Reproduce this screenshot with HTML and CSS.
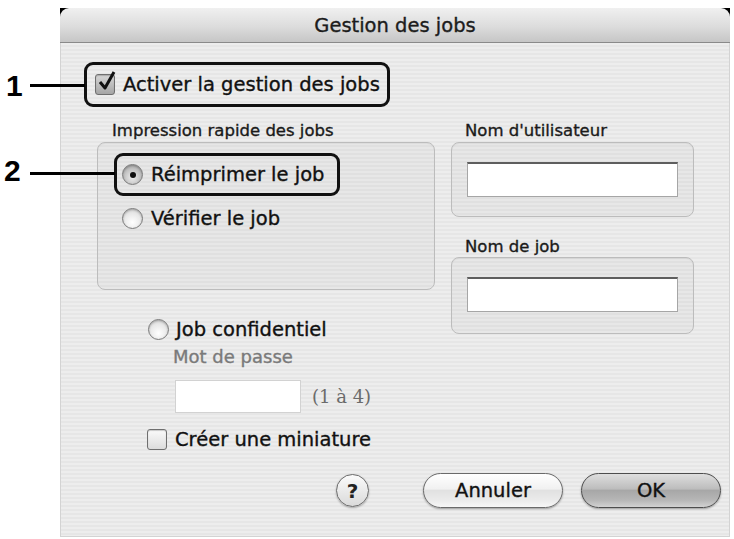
FILE: index.html
```html
<!DOCTYPE html>
<html lang="fr">
<head>
    <meta charset="UTF-8">
    <title>Gestion des jobs</title>
    <link rel="stylesheet" href="styles.css">
</head>
<body>
<div class="page">
    <!-- numbered callouts -->
    <div class="callout callout-1">1</div>
    <div class="leader leader-1"></div>
    <div class="callout callout-2">2</div>
    <div class="leader leader-2"></div>

    <div class="window">
        <div class="titlebar">Gestion des jobs</div>
        <div class="content">
            <div class="mark mark-main">
                <span class="checkbox checked">
                    <svg viewBox="0 0 20 22" width="20" height="22"><path d="M3 12 L8 18 L17 2" fill="none" stroke="#111" stroke-width="3" stroke-linejoin="round"/></svg>
                </span>
                <span class="text">Activer la gestion des jobs</span>
            </div>

            <div class="columns">
                <div class="col-left">
                    <div class="group-title">Impression rapide des jobs</div>
                    <div class="group group-quick">
                        <div class="mark mark-radio">
                            <span class="radio selected"></span>
                            <span class="text">Réimprimer le job</span>
                        </div>
                        <div class="option option-verify">
                            <span class="radio"></span>
                            <span>Vérifier le job</span>
                        </div>
                    </div>

                    <div class="option option-conf">
                        <span class="radio"></span>
                        <span>Job confidentiel</span>
                    </div>
                    <div class="hint">Mot de passe</div>
                    <div class="pass-row">
                        <span class="field-pass"></span>
                        <span class="range">(1 à 4)</span>
                    </div>
                    <div class="option option-thumb">
                        <span class="checkbox"></span>
                        <span>Créer une miniature</span>
                    </div>
                </div>

                <div class="col-right">
                    <div class="group-title">Nom d'utilisateur</div>
                    <div class="group group-field">
                        <div class="field"></div>
                    </div>
                    <div class="group-title title-job">Nom de job</div>
                    <div class="group group-field group-job">
                        <div class="field"></div>
                    </div>
                </div>
            </div>

            <div class="footer">
                <span class="help">?</span>
                <span class="button cancel">Annuler</span>
                <span class="button default">OK</span>
            </div>
        </div>
    </div>
</div>
</body>
</html>
```

FILE: styles.css
```css
* {
    box-sizing: border-box;
}

body {
    margin: 0;
    background-color: #fff;
    font-family: "DejaVu Sans", "Noto Sans", sans-serif;
    color: #111;
}

.page {
    position: relative;
    width: 734px;
    height: 539px;
    padding: 8px 0 0 60px;
    overflow: hidden;
}

/* callouts drawn over the dialog */
.callout {
    position: absolute;
    font-family: "Liberation Sans", Arial, sans-serif;
    font-weight: bold;
    font-size: 30px;
    line-height: 30px;
    color: #000;
}

.callout-1 {
    left: 6px;
    top: 71px;
}

.callout-2 {
    left: 4px;
    top: 156px;
}

.leader {
    position: absolute;
    left: 30px;
    height: 3px;
    background-color: #000;
}

.leader-1 {
    top: 84px;
    width: 55px;
}

.leader-2 {
    top: 172px;
    width: 85px;
}

/* window */
.window {
    width: 670px;
    height: 529px;
    display: flex;
    flex-direction: column;
    background-color: #000; /* shows only behind the rounded corners */
    -webkit-text-stroke: 0.35px currentColor; /* Lucida-like heavier strokes */
}

.titlebar {
    height: 35px;
    border-bottom: 1px solid #8a8a8a;
    border-radius: 9px 9px 0 0;
    background: linear-gradient(#f0f0f0, #dcdcdc 55%, #c6c6c6);
    display: flex;
    align-items: center;
    justify-content: center;
    font-size: 19.5px;
    color: #1c1c1c;
}

.content {
    flex: 1;
    border: 1px solid #d3d3d3;
    border-top: 0;
    background: repeating-linear-gradient(#ededed 0 2px, #e6e6e6 2px 4px);
    padding: 19px 0 0 23px;
}

/* black highlight frames */
.mark {
    display: flex;
    align-items: center;
    border: 3px solid #111;
    border-radius: 9px;
    font-size: 19.5px;
}

.mark-main {
    width: 306px;
    height: 45px;
    padding-left: 8px;
    gap: 8px;
}

.mark-radio {
    width: 226px;
    height: 43px;
    padding-left: 5px;
    gap: 8px;
}

/* controls */
.checkbox {
    position: relative;
    flex: none;
    width: 20px;
    height: 21px;
    border: 1px solid #6f6f6f;
    border-radius: 3px;
    background: linear-gradient(#fafafa, #dcdcdc);
    box-shadow: inset 0 1px 1px rgba(0, 0, 0, 0.2);
}

.checkbox.checked {
    background: linear-gradient(#d6d6d6, #a6a6a6);
}

.checkbox svg {
    position: absolute;
    left: 1px;
    top: -5px;
}

.radio {
    position: relative;
    flex: none;
    width: 21px;
    height: 21px;
    border-radius: 50%;
    border: 1px solid #7a7a7a;
    background: radial-gradient(circle at 50% 70%, #fff, #e8e8e8 55%, #cdcdcd);
    box-shadow: inset 0 1px 2px rgba(0, 0, 0, 0.25);
}

.radio.selected {
    background: radial-gradient(circle at 50% 65%, #eeeeee, #b5b5b5 70%, #969696);
}

.radio.selected::after {
    content: "";
    position: absolute;
    left: 50%;
    top: 50%;
    width: 6px;
    height: 6px;
    margin: -3px 0 0 -3px;
    border-radius: 50%;
    background-color: #111;
}

.option {
    display: flex;
    align-items: center;
    height: 22px;
    gap: 8px;
    font-size: 19.5px;
}

/* columns */
.columns {
    display: flex;
    margin: 14px 0 0 13px;
}

.col-left {
    width: 338px;
}

.col-right {
    width: 243px;
    margin-left: 16px;
}

.group-title {
    height: 20px;
    line-height: 20px;
    font-size: 16.5px;
    padding-left: 15px;
    margin-bottom: 1px;
    color: #1a1a1a;
}

.col-right .group-title {
    padding-left: 14px;
}

.group {
    border: 1px solid #bcbcbc;
    border-radius: 8px;
    background-color: rgba(0, 0, 0, 0.025);
    box-shadow: inset 0 1px 1px rgba(0, 0, 0, 0.05);
}

.group-quick {
    height: 148px;
    padding: 10px 0 0 16px;
}

.option-verify {
    margin: 11px 0 0 8px;
}

.option-conf {
    margin: 28px 0 0 51px;
    gap: 7px;
}

.hint {
    font-size: 18px;
    line-height: 22px;
    color: #7a7a7a;
    margin: 6px 0 0 76px;
}

.pass-row {
    display: flex;
    align-items: center;
    gap: 11px;
    margin: 12px 0 0 78px;
}

.field-pass {
    width: 126px;
    height: 33px;
    background-color: #fff;
    border: 1px solid #d2d2d2;
}

.range {
    font-family: "DejaVu Serif", "Liberation Serif", serif;
    font-size: 18px;
    color: #6b6b6b;
    -webkit-text-stroke: 0;
}

.option-thumb {
    margin: 15px 0 0 50px;
}

.group-field {
    height: 75px;
    padding: 19px 0 0 15px;
}

.group-job {
    height: 77px;
}

.title-job {
    margin-top: 20px;
    margin-bottom: 0;
}

.field {
    width: 211px;
    height: 35px;
    background-color: #fff;
    border: 1px solid #a6a6a6;
    border-top: 2px solid #5e5e5e;
}

/* buttons */
.footer {
    display: flex;
    align-items: center;
    margin-top: 23px;
    padding-left: 252px;
}

.help {
    width: 33px;
    height: 33px;
    border-radius: 50%;
    border: 1px solid #6a6a6a;
    background: linear-gradient(#fbfbfb, #dadada);
    box-shadow: 0 1px 2px rgba(0, 0, 0, 0.3);
    display: flex;
    align-items: center;
    justify-content: center;
    font-weight: bold;
    font-size: 20px;
    color: #222;
    -webkit-text-stroke: 0;
}

.button {
    width: 140px;
    height: 35px;
    border-radius: 18px;
    border: 1px solid #6a6a6a;
    display: flex;
    align-items: center;
    justify-content: center;
    font-size: 19.5px;
    background: linear-gradient(#ffffff, #f1f1f1 45%, #e1e1e1 50%, #ebebeb 80%, #f7f7f7);
    box-shadow: 0 1px 2px rgba(0, 0, 0, 0.35);
}

.cancel {
    margin-left: 54px;
}

.button.default {
    margin-left: 18px;
    border-color: #4d4d4d;
    background: linear-gradient(#dedede, #bdbdbd 45%, #a7a7a7 50%, #b7b7b7 80%, #d2d2d2);
}
```
